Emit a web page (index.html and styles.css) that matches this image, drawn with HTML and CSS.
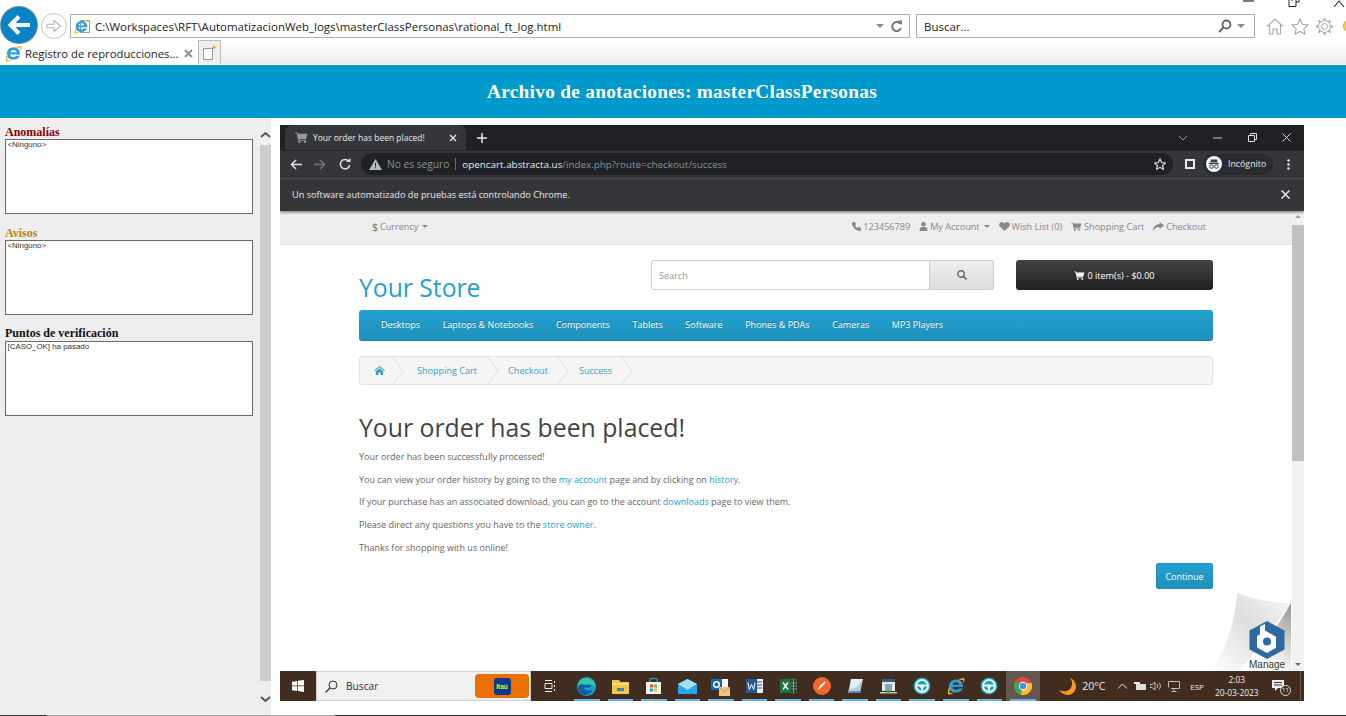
FILE: index.html
```html
<!DOCTYPE html>
<html lang="es">
<head>
<meta charset="utf-8">
<title>Registro de reproducciones</title>
<link rel="stylesheet" href="styles.css">
</head>
<body>
<svg class="defs" width="0" height="0" aria-hidden="true">
  <symbol id="ie" viewBox="0 0 18 18">
    <path fill-rule="evenodd" d="M2 9.500C2 5.400 5 2.500 9.200 2.500S16 5.500 16 10H5.500c.2 1.800 1.600 2.800 3.400 2.800 1.100 0 2.200-.5 2.800-1.400h4c-1 2.700-3.700 4.100-6.800 4.100C4.800 15.500 2 13.200 2 9.500zM5.600 7.800h6.700C12 6.300 10.800 5.200 9 5.200S6 6.300 5.600 7.800z" fill="#2f9fdc"/>
    <path d="M2.500 9.500C.8 13 .2 16.500 1.500 17.300c1.300.7 4-.5 6-2.200C5 16 3 16.300 2.500 15.700 2 15 2.500 12.700 3.400 11zM11 3C14 1.200 16.300.5 17.200 1.200c.8.700.3 3-.8 5.300.2-1.800.1-3.200-.4-3.600-.6-.4-2.300-.2-3.900.5z" fill="#f2b61c"/>
  </symbol>
  <symbol id="steer" viewBox="0 0 18 18">
    <circle cx="9" cy="9" r="8.500" fill="#20a2b5"/>
    <circle cx="9" cy="9" r="6" fill="none" stroke="#e8f8fa" stroke-width="2"/>
    <path d="M3 8.500h12M9 9v6" stroke="#e8f8fa" stroke-width="2"/>
    <circle cx="9" cy="9.500" r="2" fill="#e8f8fa"/>
  </symbol>
  <symbol id="cart" viewBox="0 0 14 12">
    <path d="M0 .5h2.500l.5 1.500h10.500L12 7.500H4.200l.3 1H12v1H3.500L1.700 1.500H0z" fill="currentColor"/>
    <circle cx="4.700" cy="10.800" r="1.200" fill="currentColor"/><circle cx="10.800" cy="10.800" r="1.200" fill="currentColor"/>
  </symbol>
</svg>

<header class="ie-frame">
  <div class="win-row">
    <svg class="win-min" width="12" height="3" viewBox="0 0 12 3"><path d="M0 1h11" stroke="#222" stroke-width="1.200"/></svg>
    <svg class="win-max" width="12" height="8" viewBox="0 0 12 8"><path d="M1 .5v7h7v-7M4 0v2M8 3h3V0" fill="none" stroke="#222"/></svg>
    <svg class="win-close" width="12" height="8" viewBox="0 0 12 8"><path d="M1 7 6 1l5 6" fill="none" stroke="#222" stroke-width="1.100"/></svg>
  </div>
  <div class="nav-row">
    <button class="back" aria-label="Atrás"><svg width="26" height="26" viewBox="0 0 26 26"><path d="M24 13H5M13 4.500 4.500 13l8.500 8.500" fill="none" stroke="#fff" stroke-width="4"/></svg></button>
    <button class="forward" aria-label="Adelante"><svg width="16" height="16" viewBox="0 0 16 16"><path d="M1 6.200h7V2.500L14.500 8 8 13.500V9.800H1z" fill="none" stroke="#b5b5b5" stroke-width="1.100"/></svg></button>
    <div class="address">
      <svg class="ie-ico" width="17" height="17" viewBox="0 0 17 17"><path d="M6.500 2.500h9v12h-9z" fill="#fff" stroke="#999"/><use href="#ie" width="15" height="15" y="1"/></svg>
      <span class="addr-text">C:\Workspaces\RFT\AutomatizacionWeb_logs\masterClassPersonas\rational_ft_log.html</span>
      <i class="caret"></i>
      <svg class="reload" width="13" height="13" viewBox="0 0 13 13"><path d="M10.500 4A4.500 4.500 0 1 0 11 8" fill="none" stroke="#777" stroke-width="2"/><path d="M7.500 .500h4.500v4.500z" fill="#777"/></svg>
    </div>
    <div class="search-box">
      <span class="search-text">Buscar...</span>
      <svg width="14" height="14" viewBox="0 0 14 14"><circle cx="8.500" cy="5.500" r="4" fill="none" stroke="#666" stroke-width="1.800"/><path d="M5.500 8.500 1 13" stroke="#666" stroke-width="2"/></svg>
      <i class="caret"></i>
    </div>
    <div class="tools">
      <svg width="18" height="17" viewBox="0 0 18 17"><path d="M1 8.500 9 1l8 7.500M3.500 7v9h3.500v-5h4v5h3.500V7" fill="none" stroke="#a8a8a8" stroke-width="1.100"/></svg>
      <svg width="18" height="17" viewBox="0 0 18 17"><path d="m9 1 2.400 5.300 5.600.6-4.200 3.800 1.200 5.600L9 13.500l-5 2.800 1.200-5.600L1 6.900l5.600-.6z" fill="none" stroke="#a8a8a8" stroke-width="1.100"/></svg>
      <svg width="17" height="17" viewBox="0 0 17 17"><circle cx="8.500" cy="8.500" r="3" fill="none" stroke="#a8a8a8"/><circle cx="8.500" cy="8.500" r="6" fill="none" stroke="#a8a8a8" stroke-width="1"/><path d="M8.500 0v2.500M8.500 14.500V17M0 8.500h2.500M14.500 8.500H17M2.500 2.500l1.800 1.800M12.700 12.700l1.800 1.800M2.500 14.500l1.800-1.800M12.700 4.300l1.800-1.800" stroke="#a8a8a8" stroke-width="1.800"/></svg>
      <span class="smiley"></span>
    </div>
  </div>
  <div class="tab-row">
    <div class="ie-tab">
      <svg width="17" height="17"><use href="#ie"/></svg>
      <span class="ie-tab-title">Registro de reproducciones...</span>
      <svg class="ie-tab-x" width="9" height="9" viewBox="0 0 9 9"><path d="m1 1 7 7M8 1 1 8" stroke="#8e8e8e" stroke-width="1.800"/></svg>
    </div>
    <div class="new-tab">
      <svg width="16" height="18" viewBox="0 0 16 18"><path d="M1.500 4.500h9v11h-9z" fill="#fff" stroke="#999"/><path d="M12 .500l.8 2 2 .7-2 .8-.8 2-.8-2-2-.8 2-.7z" fill="#f5a623"/></svg>
    </div>
  </div>
</header>

<section class="banner"><h1 class="banner-title">Archivo de anotaciones: masterClassPersonas</h1></section>

<main class="content">
  <aside class="side">
    <div class="side-panel">
      <h2 class="log-label label-red">Anomalías</h2>
      <div class="log-box">&lt;Ninguno&gt;</div>
      <h2 class="log-label label-amber">Avisos</h2>
      <div class="log-box">&lt;Ninguno&gt;</div>
      <h2 class="log-label label-black">Puntos de verificación</h2>
      <div class="log-box">[CASO_OK] ha pasado</div>
    </div>
    <div class="side-scroll">
      <svg class="side-arrow" width="11" height="8" viewBox="0 0 11 8"><path d="m1 6 4.500-4L10 6" fill="none" stroke="#555" stroke-width="2"/></svg>
      <div class="side-thumb"></div>
      <svg class="side-arrow" width="11" height="8" viewBox="0 0 11 8"><path d="m1 2 4.500 4L10 2" fill="none" stroke="#555" stroke-width="2"/></svg>
    </div>
  </aside>

  <div class="viewer">
    <div class="shot">
      <div class="c-tabs">
        <div class="c-tab">
          <svg class="c-fav" width="13" height="11"><use href="#cart"/></svg>
          <span class="c-tab-title">Your order has been placed!</span>
          <svg width="8" height="8" viewBox="0 0 8 8"><path d="m1 1 6 6M7 1 1 7" stroke="#e8eaed" stroke-width="1.300"/></svg>
        </div>
        <svg class="c-plus" width="10" height="10" viewBox="0 0 10 10"><path d="M5 0v10M0 5h10" stroke="#e8eaed" stroke-width="1.500"/></svg>
        <div class="c-winbtns">
          <svg width="10" height="6" viewBox="0 0 10 6"><path d="m1 1 4 4 4-4" fill="none" stroke="#9aa0a6"/></svg>
          <svg width="9" height="2" viewBox="0 0 9 2"><path d="M0 1h9" stroke="#c4c7c9"/></svg>
          <svg width="9" height="9" viewBox="0 0 9 9"><path d="M.5 2.500h6v6h-6zM2.500 2.500v-2h6v6h-2" fill="none" stroke="#e0e0e0"/></svg>
          <svg width="9" height="9" viewBox="0 0 9 9"><path d="m.5.500 8 8M8.500.500l-8 8" stroke="#e0e0e0"/></svg>
        </div>
      </div>
      <div class="c-toolbar">
        <svg width="12" height="11" viewBox="0 0 12 11"><path d="M12 5.500H1.500M6 1 1.500 5.500 6 10" fill="none" stroke="#dfe1e5" stroke-width="1.500"/></svg>
        <svg class="c-fwd" width="12" height="11" viewBox="0 0 12 11"><path d="M0 5.500h10.500M6 1l4.500 4.500L6 10" fill="none" stroke="#70757a" stroke-width="1.500"/></svg>
        <svg class="c-rel" width="12" height="12" viewBox="0 0 12 12"><path d="M10 3.500A4.700 4.700 0 1 0 10.700 7" fill="none" stroke="#dfe1e5" stroke-width="1.500"/><path d="M7 4h4.500V0z" fill="#dfe1e5"/></svg>
        <div class="omni">
          <svg width="13" height="11" viewBox="0 0 13 11"><path d="M6.500 0 13 11H0z" fill="#b7babd"/><path d="M6 4h1v3.500H6zM6 8.300h1v1H6z" fill="#202124"/></svg>
          <span class="omni-warn">No es seguro</span>
          <i class="omni-div"></i>
          <span class="omni-host">opencart.abstracta.us</span><span class="omni-path">/index.php?route=checkout/success</span>
          <svg class="omni-star" width="12" height="12" viewBox="0 0 18 17"><path d="m9 1 2.400 5.300 5.600.6-4.200 3.800 1.200 5.600L9 13.500l-5 2.800 1.200-5.600L1 6.900l5.600-.6z" fill="none" stroke="#dfe1e5" stroke-width="1.800"/></svg>
        </div>
        <svg class="c-side" width="10" height="10" viewBox="0 0 10 10"><path d="M1 1h8v8H1z" fill="none" stroke="#e8eaed" stroke-width="2"/></svg>
        <div class="pill">
          <svg width="16" height="16" viewBox="0 0 16 16"><circle cx="8" cy="8" r="8" fill="#f1f3f4"/><path d="M5 3.500h6l.8 3H4.200zM3 7h10v1H3z" fill="#3c4043"/><circle cx="5.600" cy="10.500" r="1.800" fill="none" stroke="#3c4043"/><circle cx="10.400" cy="10.500" r="1.800" fill="none" stroke="#3c4043"/></svg>
          <span class="pill-text">Incógnito</span>
        </div>
        <svg class="c-dots" width="3" height="11" viewBox="0 0 3 11"><circle cx="1.500" cy="1.500" r="1.200" fill="#e8eaed"/><circle cx="1.500" cy="5.500" r="1.200" fill="#e8eaed"/><circle cx="1.500" cy="9.500" r="1.200" fill="#e8eaed"/></svg>
      </div>
      <div class="c-info">
        <span class="c-info-text">Un software automatizado de pruebas está controlando Chrome.</span>
        <svg width="9" height="9" viewBox="0 0 9 9"><path d="m.5.500 8 8M8.500.500l-8 8" stroke="#e8eaed" stroke-width="1.500"/></svg>
      </div>

      <div class="c-page">
        <div class="store">
          <div class="top-bar">
            <span class="top-item"><b class="dollar">$</b> Currency <i class="mini-caret"></i></span>
            <div class="top-links">
              <span class="top-item"><svg width="9" height="9" viewBox="0 0 9 9"><path d="M1 0 3 0l1 2.500-1 1c.5 1 1.500 2 2.500 2.500l1-1L9 6v2.500L8 9C4 9 0 5 0 1z" fill="currentColor"/></svg> 123456789</span>
              <span class="top-item"><svg width="9" height="9" viewBox="0 0 9 9"><circle cx="4.500" cy="2.300" r="2.300" fill="currentColor"/><path d="M.5 9c0-3 1-4 2.500-4h3c1.500 0 2.500 1 2.500 4z" fill="currentColor"/></svg> My Account <i class="mini-caret"></i></span>
              <span class="top-item"><svg width="11" height="9" viewBox="0 0 11 9"><path d="M5.500 9 .8 4.500C-.8 2.500.8 0 3 0c1 0 2 .6 2.500 1.500C6 .6 7 0 8 0c2.200 0 3.800 2.500 2.200 4.500z" fill="currentColor"/></svg> Wish List (0)</span>
              <span class="top-item"><svg width="11" height="9"><use href="#cart"/></svg> Shopping Cart</span>
              <span class="top-item"><svg width="11" height="9" viewBox="0 0 11 9"><path d="M6.500 0 11 3.500 6.500 7V5C4 5 2 5.500 0 9c0-4 2.500-6.500 6.500-7z" fill="currentColor"/></svg> Checkout</span>
            </div>
          </div>
          <div class="container">
            <div class="head">
              <div class="logo">Your Store</div>
              <div class="searchbar">
                <span class="search-input">Search</span>
                <span class="search-btn"><svg width="10" height="10" viewBox="0 0 10 10"><circle cx="4" cy="4" r="3.200" fill="none" stroke="#666" stroke-width="1.400"/><path d="m6.500 6.500 3 3" stroke="#666" stroke-width="1.600"/></svg></span>
              </div>
              <div class="cart-btn"><svg width="11" height="9"><use href="#cart"/></svg> 0 item(s) - $0.00</div>
            </div>
            <nav class="menu">
              <span>Desktops</span><span>Laptops &amp; Notebooks</span><span>Components</span><span>Tablets</span><span>Software</span><span>Phones &amp; PDAs</span><span>Cameras</span><span>MP3 Players</span>
            </nav>
            <div class="crumbs">
              <span class="crumb crumb-home"><svg width="11" height="9" viewBox="0 0 11 9"><path d="M5.500 0 11 4.500l-.6.700-4.900-4-4.900 4L0 4.500zM1.800 5.300l3.700-3 3.700 3V9H6.500V6.500h-2V9H1.800z" fill="currentColor"/></svg></span>
              <span class="crumb">Shopping Cart</span>
              <span class="crumb">Checkout</span>
              <span class="crumb">Success</span>
            </div>
            <h2 class="order-title">Your order has been placed!</h2>
            <p class="para">Your order has been successfully processed!</p>
            <p class="para">You can view your order history by going to the <a>my account</a> page and by clicking on <a>history</a>.</p>
            <p class="para">If your purchase has an associated download, you can go to the account <a>downloads</a> page to view them.</p>
            <p class="para">Please direct any questions you have to the <a>store owner</a>.</p>
            <p class="para">Thanks for shopping with us online!</p>
            <div class="actions"><span class="continue">Continue</span></div>
          </div>
        </div>
        <div class="page-scroll">
          <i class="ps-up"></i>
          <div class="ps-thumb"></div>
          <i class="ps-down"></i>
        </div>
        <div class="peel">
          <svg width="82" height="78" viewBox="0 0 82 78">
            <defs>
              <linearGradient id="pg" x1="0" y1="1" x2="1" y2="0"><stop offset="0" stop-color="#fff"/><stop offset=".55" stop-color="#dedede"/><stop offset="1" stop-color="#f7f7f7"/></linearGradient>
              <linearGradient id="sh" x1=".95" y1="0" x2=".45" y2=".8"><stop offset="0" stop-color="#949494"/><stop offset=".6" stop-color="#d8d8d8"/><stop offset="1" stop-color="#fff"/></linearGradient>
            </defs>
            <path d="M0 78C12 62 24 40 27 0c18 7 38 10 54 10L30 78z" fill="url(#pg)"/>
            <path d="M81 10V78H28C48 58 68 34 81 10z" fill="url(#sh)"/>
            <path d="m57 28 17.500 9.500v19L57 66l-17.500-9.500v-19z" fill="#2d6a9f"/>
            <path d="M50 33.500l5-2.500v6.500l11 6.300v11L57 60l-10-5.500V43l3-1.800z" fill="#fff"/>
            <circle cx="57" cy="48.500" r="4" fill="#2d6a9f"/>
          </svg>
          <span class="peel-text">Manage</span>
        </div>
      </div>

      <div class="taskbar">
        <div class="start"><svg width="12" height="12" viewBox="0 0 12 12"><path d="M0 1.700 5.300.900v4.700H0zM6 .800 12 0v5.600H6zM0 6.300h5.300v4.800L0 10.300zM6 6.300h6V12l-6-.9z" fill="#fff"/></svg></div>
        <div class="t-search">
          <svg width="13" height="13" viewBox="0 0 13 13"><circle cx="8" cy="5" r="4" fill="none" stroke="#333"/><path d="M5 8 .5 12.500" stroke="#333" stroke-width="1.200"/></svg>
          <span class="t-search-text">Buscar</span>
          <span class="itau"><span class="itau-logo">Itaú</span></span>
        </div>
        <div class="t-view"><svg width="12" height="12" viewBox="0 0 12 12"><path d="M1 .500h7M1 11.500h7M1 3.500h7v5H1zM10.500 1v2M10.500 5v2M10.500 9v2" fill="none" stroke="#eee"/></svg></div>
        <div class="t-icons">
          <span class="t-app on"><svg width="19" height="19" viewBox="0 0 19 19"><circle cx="9.500" cy="9.500" r="9.500" fill="#1a9fd4"/><path d="M1 11C2 5 8 3 12 5c3 1.500 3 5 0 5.500H7c0 3 4 4 9 2-2 4-6 6-9 5.500-4-1-6-4-6-6.500z" fill="#0f5fa0"/><path d="M9 8c3-1 8-1 10 2-1-6-6-9-10-9S2 4 1 9c2-2 5-2 8-1z" fill="#36c5a8"/></svg></span>
          <span class="t-app on"><svg width="17" height="15" viewBox="0 0 17 15"><path d="M0 1h7l1.500 2H17v12H0z" fill="#f3c64b"/><path d="M0 4h17v2H0z" fill="#f8dd85"/><path d="M5 9h7v3H5z" fill="#2a8bc4"/></svg></span>
          <span class="t-app on"><svg width="17" height="18" viewBox="0 0 17 18"><path d="M1 5h15v12H1z" fill="#f4f4f4"/><path d="M5 5V2.500C5 1 12 1 12 2.500V5" fill="none" stroke="#25a3b8" stroke-width="1.300"/><path d="M5 7.500h3v3H5z" fill="#e8482b"/><path d="M9 7.500h3v3H9z" fill="#7cb82f"/><path d="M5 11.500h3v3H5z" fill="#1f9be0"/><path d="M9 11.500h3v3H9z" fill="#f6b91e"/></svg></span>
          <span class="t-app on"><svg width="19" height="15" viewBox="0 0 19 15"><path d="M0 5 9.500 0 19 5v10H0z" fill="#27a6e5"/><path d="M0 5l9.500 6L19 5 9.500 0z" fill="#a5def8"/></svg></span>
          <span class="t-app on"><svg width="19" height="19" viewBox="0 0 19 19"><path d="M7 2h10v8H7z" fill="#fff"/><path d="M0 2h11v11H0z" fill="#0f6cbd"/><circle cx="5.500" cy="7.500" r="2.800" fill="none" stroke="#fff" stroke-width="1.400"/><path d="M8 10h11v9H8z" fill="#f1c38a"/><path d="m8 10 5.500 5 5.500-5" fill="none" stroke="#c68a3e"/></svg></span>
          <span class="t-app on"><svg width="17" height="16" viewBox="0 0 17 16"><path d="M6 1h11v14H6z" fill="#f3f3f3"/><path d="M10 4h6M10 7h6M10 10h6" stroke="#2a5699"/><path d="M0 1h11v14H0z" fill="#2a5699"/><path d="m2 4.500 1.300 7 2.200-5 2.200 5L9 4.500" fill="none" stroke="#fff"/></svg></span>
          <span class="t-app on"><svg width="17" height="16" viewBox="0 0 17 16"><path d="M10 1h7v14h-7z" fill="none" stroke="#1e7145"/><path d="M10 5h7M10 8h7M10 11h7M13.500 1v14" stroke="#5faf80"/><path d="M0 1h11v14H0z" fill="#1e7145"/><path d="m3 4.500 5 7M8 4.500l-5 7" stroke="#fff" stroke-width="1.400"/></svg></span>
          <span class="t-app on"><svg width="18" height="18" viewBox="0 0 18 18"><circle cx="9" cy="9" r="9" fill="#f0662e"/><path d="m5 13 1-3 5-5c1-1 2 0 1.500 1l-5 5z" fill="#fff"/></svg></span>
          <span class="t-app on"><svg width="17" height="17" viewBox="0 0 17 17"><path d="m4 1h12L13 15H1z" fill="#b5cfdc"/><path d="M4 1h12l-6 8-7 2z" fill="#e6f0f4"/><path d="M1 15h12l1-2H2z" fill="#5f8fa3"/></svg></span>
          <span class="t-app on"><svg width="17" height="17" viewBox="0 0 17 17"><path d="M2 1h13v12H2z" fill="#e6e9ea"/><path d="M2 1h13v3H2z" fill="#3a5f7c"/><path d="M5 13V6h7v7" fill="#8aa7b7"/><path d="M0 14h17v1.500H0z" fill="#ccc"/><circle cx="8.500" cy="14" r="2" fill="#4aa64a"/></svg></span>
          <span class="t-app on"><svg width="18" height="18"><use href="#steer"/></svg></span>
          <span class="t-app on"><svg width="18" height="18"><use href="#ie"/></svg></span>
          <span class="t-app on"><svg width="18" height="18"><use href="#steer"/></svg></span>
          <span class="t-app on active"><svg width="18" height="18" viewBox="0 0 18 18"><circle cx="9" cy="9" r="9" fill="#e04a3a"/><path d="M9 9 1.200 4.500A9 9 0 0 0 7 17.800z" fill="#3aa757"/><path d="M9 9l-2 8.800A9 9 0 0 0 17.500 6H9z" fill="#fbc02d"/><circle cx="9" cy="9" r="4.200" fill="#fff"/><circle cx="9" cy="9" r="3.300" fill="#4a90e2"/></svg></span>
        </div>
        <div class="tray">
          <svg class="moon" width="17" height="17" viewBox="0 0 17 17"><path d="M11 0c3 3 3 8.500-.5 11.500C7.500 14 3.500 13.500 0 12c2 3.500 6 5 9 5 5 0 8-4.500 8-8.500 0-4-2.500-7.500-6-8.500z" fill="#f39a1f"/></svg>
          <span class="temp">20°C</span>
          <svg class="tray-up" width="11" height="6" viewBox="0 0 11 6"><path d="m1 5.500 4.500-4.500 4.500 4.500" fill="none" stroke="#eee"/></svg>
          <svg class="tray-bat" width="12" height="9" viewBox="0 0 12 9"><path d="M2 2h10v6H2z" fill="#ddd"/><path d="M0 0h6v2H0z" fill="#eee"/></svg>
          <svg class="tray-vol" width="11" height="10" viewBox="0 0 11 10"><path d="M0 3.500h2L5 1v8L2 6.500H0z" fill="none" stroke="#ddd" stroke-width=".8"/><path d="M7 3a3 3 0 0 1 0 4M9 1.500a5 5 0 0 1 0 7" fill="none" stroke="#ddd" stroke-width=".8"/></svg>
          <svg class="tray-net" width="12" height="11" viewBox="0 0 12 11"><path d="M3 .500h8.500v7H3M6 7.500v3M3.500 10.500h5M.5.500H5M.5.500v6" fill="none" stroke="#ddd" stroke-width=".8"/></svg>
          <span class="lang">ESP</span>
          <div class="clock"><span>2:03</span><span>20-03-2023</span></div>
          <span class="notif">
            <svg width="13" height="12" viewBox="0 0 13 12"><path d="M0 0h12v8H6l-3 3V8H0z" fill="#eee"/><path d="M2 2.500h8M2 5h8" stroke="#412c20"/></svg>
            <b class="notif-badge">11</b>
          </span>
        </div>
      </div>
    </div>
  </div>
</main>
<div class="bottom-line"><i class="bl-a"></i><i class="bl-b"></i><i class="bl-c"></i></div>
</body>
</html>
```
FILE: styles.css
```css
* { box-sizing: border-box; }
html, body { margin: 0; height: 716px; overflow: hidden; background: #fff; }
body { display: flex; flex-direction: column; width: 1346px; font-family: "Open Sans", "Noto Sans", sans-serif; }
h1, h2, p { margin: 0; }
i { font-style: normal; display: block; }
svg { display: block; flex: none; }
.defs { position: absolute; }

/* Browser frame */
.ie-frame { height: 65px; flex: none; background: #fff; }
.win-row { height: 14px; display: flex; justify-content: flex-end; overflow: hidden; }
.win-min { margin-right: 33px; }
.win-max { margin-right: 34px; margin-top: -1px; }
.win-close { transform: translateX(-1px); }
.nav-row { height: 26px; display: flex; align-items: flex-start; padding-left: 1px; }
.back { width: 36px; height: 36px; margin-top: -7px; border: 0; border-radius: 50%; background: #0a83c6; padding: 0; display: flex; align-items: center; justify-content: center; position: relative; z-index: 2; box-shadow: 0 0 0 1px #6a8fa5; flex: none; }
.forward { width: 26px; height: 26px; margin: -1px 0 0 4px; border: 1px solid #c4c4c4; border-radius: 50%; background: #fff; padding: 0; display: flex; align-items: center; justify-content: center; flex: none; }
.address { width: 840px; height: 24px; margin-left: 3px; border: 1px solid #aeaeae; display: flex; align-items: center; padding-left: 3px; flex: none; }
.addr-text { font-size: 11.480px; color: #222; margin-left: 4px; flex: 1; white-space: nowrap; }
.caret { width: 0; height: 0; border: 4px solid transparent; border-top: 4px solid #8a8a8a; border-bottom: 0; }
.reload { margin: 0 6px 0 6px; }
.search-box { width: 339px; height: 24px; margin-left: 6px; border: 1px solid #aeaeae; display: flex; align-items: center; padding: 0 9px 0 7px; flex: none; }
.search-text { flex: 1; font-size: 11.500px; color: #222; }
.search-box .caret { margin-left: 5px; }
.tools { display: flex; align-items: center; gap: 7px; margin-left: 11px; height: 24px; flex: none; }
.smiley { width: 14px; height: 14px; border-radius: 50%; background: #f6d24a; border: 1px solid #c9a92f; margin-left: 3px; flex: none; }

.tab-row { height: 25px; display: flex; background: linear-gradient(#fff 0, #fff 15%, #ececec 100%); border-bottom: 1px solid #fff; }
.ie-tab { width: 198px; height: 24px; background: #fff; display: flex; align-items: center; padding: 2px 0 0 5px; }
.ie-tab-title { font-size: 11.300px; color: #222; margin-left: 3px; white-space: nowrap; flex: 1; }
.ie-tab-x { margin-right: 5px; }
.new-tab { width: 23px; height: 24px; background: #eee; border: 1px solid #bdbdbd; border-bottom: 0; display: flex; align-items: center; justify-content: center; }

/* Banner */
.banner { height: 53px; flex: none; background: #0099cc; display: flex; align-items: center; justify-content: center; padding-left: 18px; }
.banner-title { font: bold 19.300px "Liberation Serif", serif; color: #fff; letter-spacing: .3px; }

/* Main */
.content { flex: 1; display: flex; min-height: 0; }
.side { width: 272px; display: flex; flex: none; }
.side-panel { width: 260px; background: #eee; padding: 7px 7px 0 5px; }
.log-label { font: bold 12px/14px "Liberation Serif", serif; height: 14px; }
.label-red { color: #8b0000; }
.label-amber { color: #b8860b; margin-top: 12px; }
.label-black { color: #111; margin-top: 12px; line-height: 12px; }
.log-box { width: 248px; height: 75px; background: #fff; border: 1px solid #6a6a6a; font: 7.900px/9px "Liberation Sans", Arial, sans-serif; color: #333; padding: 0 1px 0 1.500px; }
.side-scroll { width: 11px; background: #eee; display: flex; flex-direction: column; align-items: center; padding-top: 13px; }
.side-thumb { flex: 1; width: 11px; background: #cdcdcd; margin: 6px 0 14px; }
.side-scroll .side-arrow:last-child { margin-bottom: 12px; }

.viewer { flex: 1; padding: 7px 0 0 8px; background: #fff; }
.shot { width: 1024px; height: 576px; display: flex; flex-direction: column; overflow: hidden; }

/* Captured Chrome */
.c-tabs { height: 25px; flex: none; background: #202124; display: flex; align-items: flex-end; padding-left: 5px; }
.c-tab { width: 181px; height: 25px; background: #35363a; border-radius: 7px 7px 0 0; display: flex; align-items: center; padding: 0 9px 0 10px; color: #9aa0a6; }
.c-fav { color: #9a9a9a; }
.c-tab-title { flex: 1; font: 8.500px "Open Sans", sans-serif; color: #e8eaed; margin-left: 5px; white-space: nowrap; }
.c-plus { margin: 0 0 7px 11px; }
.c-winbtns { margin-left: auto; width: 126px; display: flex; justify-content: space-between; align-items: center; height: 25px; padding-right: 13px; }
.c-toolbar { height: 28px; flex: none; background: #35363a; border-top: 1px solid #2a2b2e; display: flex; align-items: center; padding: 0 0 1px 10px; }
.c-fwd { margin-left: 12px; }
.c-rel { margin-left: 13px; }
.omni { width: 812px; height: 22px; border-radius: 11px; background: #202124; margin-left: 10px; display: flex; align-items: center; padding-left: 8px; font: 10.200px "Open Sans", sans-serif; white-space: nowrap; }
.omni-warn { color: #8c9095; margin-left: 5px; }
.omni-div { width: 1px; height: 12px; background: #6b6f73; margin: 0 6px; }
.omni-host { color: #e8eaed; font-size: 9.850px; }
.omni-path { color: #8c9095; font-size: 9.850px; }
.omni-star { margin-left: auto; margin-right: 7px; }
.c-side { margin-left: 12px; }
.pill { width: 70px; height: 21px; border-radius: 11px; background: #2a2b2e; margin-left: 8px; display: flex; align-items: center; padding-left: 3px; }
.pill-text { font: 8.800px "Open Sans", sans-serif; color: #e8eaed; margin-left: 6px; }
.c-dots { margin-left: 14px; }
.c-info { height: 33px; flex: none; background: #35363a; border-top: 1px solid #4a4b4f; display: flex; align-items: center; justify-content: space-between; padding: 0 14px 2px 12px; box-shadow: 0 2px 2px rgba(0,0,0,.35); position: relative; z-index: 1; }
.c-info-text { font: 9.170px "Open Sans", sans-serif; color: #e8eaed; }

/* Captured shop page */
.c-page { height: 460px; flex: none; display: flex; position: relative; background: #fff; }
.store { width: 1012px; flex: none; font-size: 9.100px; color: #666; }
.top-bar { height: 34px; background: #eee; border-bottom: 1px solid #e2e2e2; display: flex; align-items: center; justify-content: space-between; padding: 0 86px 2px 92px; color: #888; }
.top-links { display: flex; gap: 9px; }
.top-item { display: inline-flex; align-items: center; gap: 2px; white-space: nowrap; }
.dollar { font-size: 10.500px; font-weight: 600; }
.mini-caret { width: 0; height: 0; border: 3px solid transparent; border-top-color: #888; border-bottom: 0; margin-left: 2px; }
.container { width: 854px; margin-left: 79px; }
.head { height: 65px; display: flex; align-items: flex-start; padding-top: 15px; }
.logo { width: 292px; margin-top: 13px; font-size: 24.700px; line-height: 30px; color: #23a1d1; }
.searchbar { width: 343px; height: 30px; display: flex; }
.search-input { flex: 1; border: 1px solid #ccc; border-radius: 3px 0 0 3px; font-size: 9.100px; color: #999; padding-left: 7px; display: flex; align-items: center; }
.search-btn { width: 64px; background: linear-gradient(#eee, #ddd); border: 1px solid #ccc; border-left: 0; border-radius: 0 3px 3px 0; display: flex; align-items: center; justify-content: center; }
.cart-btn { width: 197px; height: 30px; margin-left: 22px; border-radius: 3px; background: linear-gradient(#444, #1f1f1f); color: #fff; display: flex; align-items: center; justify-content: center; gap: 2px; font-size: 9.100px; }
.menu { height: 31px; border-radius: 3px; background: linear-gradient(#23a1d1, #1f90bb); border-bottom: 1px solid #1b7a9e; display: flex; align-items: center; gap: 22.600px; padding: 0 0 2px 22px; color: #fff; font-size: 9px; text-shadow: 0 -1px 0 rgba(0,0,0,.25); }
.crumbs { height: 29px; margin-top: 15px; background: #f5f5f5; border: 1px solid #e2e2e2; border-radius: 3px; display: flex; align-items: center; color: #3aa0c8; font-size: 9.100px; overflow: hidden; }
.crumb { height: 27px; display: flex; align-items: center; padding: 0 21px 0 10px; position: relative; }
.crumb::after { content: ""; position: absolute; right: .5px; top: 4px; width: 19px; height: 19px; border: solid #e0e0e0; border-width: 1px 1px 0 0; transform: scaleX(.75) rotate(45deg); }
.crumb-home { padding: 0 18px 0 14px; margin-right: 4px; }
.order-title { margin-top: 24px; font-size: 24.800px; line-height: 36px; font-weight: 400; color: #444; white-space: nowrap; }
.para { font-size: 9px; line-height: 13px; margin-bottom: 9.700px; color: #666; white-space: nowrap; }
.para:first-of-type { margin-top: 5px; }
.para a { color: #23a1d1; }
.actions { display: flex; justify-content: flex-end; margin-top: 5px; }
.continue { width: 57px; height: 26px; border-radius: 2px; background: linear-gradient(#23a1d1, #1f90bb); border: 1px solid #1f90bb; color: #fff; font-size: 9px; display: flex; align-items: center; justify-content: center; }
.page-scroll { width: 12px; background: #f1f1f1; display: flex; flex-direction: column; align-items: center; }
.ps-up { width: 0; height: 0; border: 3px solid transparent; border-bottom: 3px solid #999; border-top: 0; margin: 4px 0 7px; }
.ps-thumb { width: 12px; height: 236px; background: #c1c1c1; }
.ps-down { width: 0; height: 0; border: 3px solid transparent; border-top: 3px solid #666; border-bottom: 0; margin-top: auto; margin-bottom: 5px; }
.peel { position: absolute; left: 930px; bottom: 0; width: 82px; height: 78px; }
.peel-text { position: absolute; left: 39px; bottom: 0; font: 10px/12px "Liberation Sans", Arial, sans-serif; color: #333; }

/* Captured taskbar */
.taskbar { height: 30px; flex: none; background: #412c20; display: flex; align-items: center; color: #eee; }
.start { width: 36px; display: flex; justify-content: center; }
.t-search { width: 215px; height: 30px; background: #f0f0f0; border: 1px solid #cfcfcf; display: flex; align-items: center; padding-left: 8px; }
.t-search-text { font-size: 10.200px; color: #333; margin-left: 8px; flex: 1; }
.itau { width: 54px; height: 24px; background: #ec7000; border-radius: 4px; margin-right: 1px; display: flex; align-items: center; justify-content: center; }
.itau-logo { width: 17px; height: 17px; border-radius: 3px; background: #0b3a8f; color: #f5e12d; font: bold 6.500px/17px "Liberation Sans", Arial, sans-serif; text-align: center; display: block; }
.t-view { width: 36px; display: flex; justify-content: center; padding-left: 1px; }
.t-icons { display: flex; height: 30px; margin-left: 3px; }
.t-app { width: 33.550px; height: 30px; display: flex; align-items: center; justify-content: center; position: relative; }
.t-app.on::after { content: ""; position: absolute; left: 4px; right: 4px; bottom: 0; height: 2px; background: #62b5e8; }
.t-app.active { background: #65564d; }
.tray { flex: 1; display: flex; align-items: center; gap: 6px; padding: 0 15px 0 19.500px; margin-right: 3px; border-right: 1px solid #6b5a4d; height: 30px; }
.temp { font-size: 10.500px; white-space: nowrap; }
.tray-up { margin-left: 5.500px; }
.tray-bat { margin-left: .5px; }
.tray-vol { margin-left: -2.500px; }
.tray-net { margin-left: 1.500px; }
.lang { font-size: 8px; margin-left: 4px; }
.clock { display: flex; flex-direction: column; align-items: center; font-size: 8.400px; line-height: 13px; margin-left: 5px; white-space: nowrap; }
.notif { position: relative; margin-left: auto; }
.notif-badge { position: absolute; right: -6px; bottom: -4px; width: 11px; height: 11px; border-radius: 50%; background: #412c20; border: 1px solid #ddd; font: 6px/9px "Open Sans", sans-serif; text-align: center; color: #fff; }

.bottom-line { height: 1px; flex: none; display: flex; }
.bl-a { width: 47px; background: #333; }
.bl-b { width: 288px; background: #aaa; }
.bl-c { flex: 1; background: #333; }
```
